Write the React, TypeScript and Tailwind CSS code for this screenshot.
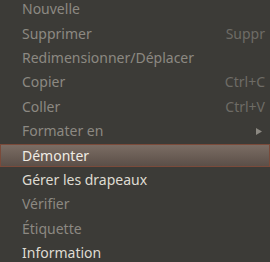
import React from "react";

type Item = { label: string; enabled?: boolean; shortcut?: string; submenu?: boolean; active?: boolean };

const items: Item[] = [
  { label: "Nouvelle" },
  { label: "Supprimer", shortcut: "Suppr" },
  { label: "Redimensionner/Déplacer" },
  { label: "Copier", shortcut: "Ctrl+C" },
  { label: "Coller", shortcut: "Ctrl+V" },
  { label: "Formater en", submenu: true },
  { label: "Démonter", enabled: true, active: true },
  { label: "Gérer les drapeaux", enabled: true },
  { label: "Vérifier" },
  { label: "Étiquette" },
  { label: "Information", enabled: true },
];

export default function App() {
  return (
    <div className="w-[270px] h-[262px] overflow-hidden bg-[#3c3b37] font-['Noto_Sans',sans-serif] text-[14px]">
      <div className="-mt-[3px] flex flex-col">
        {items.map((it) => (
          <div key={it.label} className="h-[24.4px] flex flex-col">
            <div
              className={
                it.active
                  ? "mt-px h-[22.5px] flex items-center pl-[21px] pr-[4px] border border-[#7a4a3a] bg-gradient-to-b from-[#7b6d64] to-[#5b4f48] text-[#f0ece4]"
                  : "h-[24.4px] flex items-center pl-[22px] pr-[4px] " + (it.enabled ? "text-[#dfdbd2]" : "text-[#8c8982]")
              }
            >
              <span className="flex-1 leading-[16px]">{it.label}</span>
              {it.shortcut && <span className="text-[#6e6c66] leading-[16px] mr-px">{it.shortcut}</span>}
              {it.submenu && (
                <svg width="6" height="7" viewBox="0 0 6 7" className="mr-[4px]">
                  <path d="M0 0 L6 3.5 L0 7 Z" fill="#8c8982" />
                </svg>
              )}
            </div>
          </div>
        ))}
      </div>
    </div>
  );
}
